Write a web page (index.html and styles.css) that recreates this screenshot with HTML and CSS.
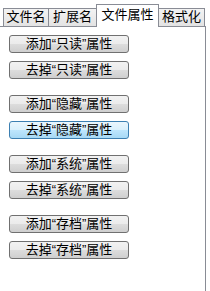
FILE: index.html
```html
<!DOCTYPE html>
<html lang="zh-CN">
<head>
    <meta charset="UTF-8">
    <title>文件属性</title>
    <link rel="stylesheet" href="styles.css">
</head>
<body>
    <div class="tabs">
        <div class="tab t1">文件名</div>
        <div class="tab t2">扩展名</div>
        <div class="tab active">文件属性</div>
        <div class="tab t4">格式化</div>
    </div>
    <div class="panel">
        <div class="group">
            <button class="btn">添加“只读”属性</button>
            <button class="btn">去掉“只读”属性</button>
        </div>
        <div class="group">
            <button class="btn">添加“隐藏”属性</button>
            <button class="btn hover">去掉“隐藏”属性</button>
        </div>
        <div class="group">
            <button class="btn">添加“系统”属性</button>
            <button class="btn">去掉“系统”属性</button>
        </div>
        <div class="group">
            <button class="btn">添加“存档”属性</button>
            <button class="btn">去掉“存档”属性</button>
        </div>
    </div>
</body>
</html>
```

FILE: styles.css
```css
body {
    margin: 0;
    width: 210px;
    height: 291px;
    background-color: #ffffff;
    font-family: "Liberation Sans", "Noto Sans CJK SC", sans-serif;
    font-size: 13px;
    overflow: hidden;
}
.tabs {
    display: flex;
    align-items: flex-end;
    height: 26px;
    padding-left: 3px;
}
.tab {
    box-sizing: border-box;
    height: 18px;
    line-height: 16px;
    text-align: center;
    border: 1px solid #898c95;
    border-bottom: none;
    background: linear-gradient(#f3f3f3, #e3e3e3);
    color: #000;
    margin-right: -1px;
}
.t1 { width: 46px; }
.t2 { width: 49px; }
.t4 { width: 47px; }
.tab.active {
    width: 63px;
    height: 23px;
    line-height: 20px;
    background: #ffffff;
    margin-bottom: -1px;
    position: relative;
    z-index: 1;
}
.panel {
    box-sizing: border-box;
    width: 206px;
    height: 265px;
    border-top: 1px solid #898c95;
    border-right: 1px solid #898c95;
    padding: 8px 0 0 9px;
}
.group {
    display: flex;
    flex-direction: column;
    gap: 8px;
    margin-bottom: 16px;
}
.btn {
    box-sizing: border-box;
    width: 120px;
    height: 18px;
    padding: 0;
    border: 1px solid #707070;
    border-radius: 3px;
    background: linear-gradient(#f2f2f2 0%, #ebebeb 50%, #dddddd 50%, #cfcfcf 100%);
    font-family: "Liberation Sans", "Noto Sans CJK SC", sans-serif;
    font-size: 13px;
    line-height: 16px;
    color: #000;
}
.btn.hover {
    border-color: #3c7fb1;
    background: linear-gradient(#eaf6fd 0%, #d9f0fc 50%, #bee6fd 50%, #a7d9f5 100%);
}
```
